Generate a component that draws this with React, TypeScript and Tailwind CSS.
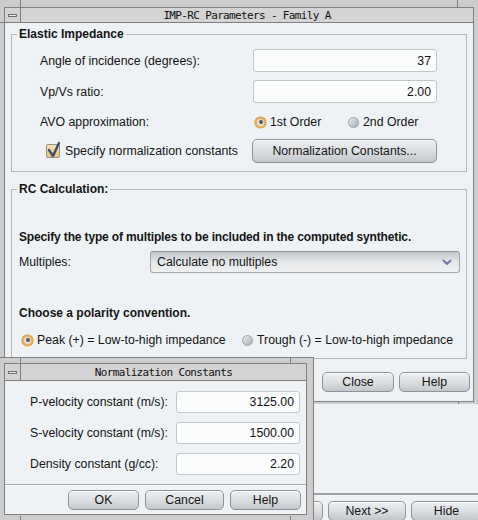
import React from "react";

function Btn({ label, w, h = 20 }: { label: string; w: string; h?: number }) {
  return (
    <div
      className={`${w} ${h === 24 ? "h-[24px]" : "h-[20px]"} shrink-0 flex items-center justify-center rounded-[5px] border border-[#8d9399] bg-linear-to-b from-[#eef0f2] via-[#dcdfe2] to-[#c3c7cb] shadow-[inset_0_1px_0_#ffffff] text-[12.3px] leading-[14px] text-[#141414]`}
    >
      {label}
    </div>
  );
}

function TitleBar({ title, tall }: { title: string; tall?: boolean }) {
  return (
    <div
      className={`${tall ? "h-[17px]" : "h-[15px]"} shrink-0 flex bg-[#d4d4d4] border-b border-[#7f7f7f]`}
    >
      <div className="w-[16px] shrink-0 flex items-center justify-center border-r border-[#7f7f7f]">
        <div className="w-[9px] h-[3px] border border-[#6f6f6f] bg-[#ececec]" />
      </div>
      <div className="flex-1 flex items-center justify-center [font-family:'DejaVu_Sans_Mono',monospace] text-[11px] tracking-[-0.65px] text-[#111] leading-none">
        {title}
      </div>
    </div>
  );
}

function Radio({ on }: { on?: boolean }) {
  if (on) {
    return (
      <span className="w-[11px] h-[11px] shrink-0 rounded-full bg-[#edb04a] flex items-center justify-center shadow-[0_0_0_0.5px_#c98d2a]">
        <span className="w-[7px] h-[7px] rounded-full bg-[#dfe2e6] flex items-center justify-center">
          <span className="w-[4px] h-[4px] rounded-full bg-[#4f586c]" />
        </span>
      </span>
    );
  }
  return (
    <span className="w-[11px] h-[11px] shrink-0 rounded-full border border-[#9aa0a6] bg-linear-to-br from-[#eceef0] to-[#a9aeb3]" />
  );
}

function Input({ value, w, h }: { value: string; w: string; h: string }) {
  return (
    <div
      className={`${w} ${h} shrink-0 flex items-center justify-end pr-[5px] bg-[#fbfcfc] border border-[#c2c6ca] rounded-[3px] text-[12.3px] leading-[14px] text-[#111]`}
    >
      {value}
    </div>
  );
}

export default function App() {
  return (
    <div className="relative w-[478px] h-[520px] overflow-hidden bg-[#cdcdcd] [font-family:'Liberation_Sans',Arial,sans-serif] text-[#141414]">
      {/* Background window (bottom) */}
      <div className="absolute left-0 top-[402px] w-[490px] h-[130px] bg-[#cdcdcd] pt-[1px]">
        <div className="h-full flex flex-col bg-[#eef2f4] border-t border-[#8a8a8a]">
          <div className="h-[89px] shrink-0" />
          <div className="h-[2px] shrink-0 bg-[#9ea2a6]" />
          <div className="flex justify-end gap-[5px] pr-[8px] pt-[6px]">
            <Btn label="" w="w-[78px]" />
            <Btn label="Next >>" w="w-[78px]" />
            <Btn label="Hide" w="w-[71px]" />
          </div>
        </div>
      </div>

      {/* Main window */}
      <div className="absolute left-0 top-0 w-[478px] h-[404px] bg-[#cdcdcd] pt-[7px] px-[4px] pb-[2px]">
        <div className="h-full flex flex-col border border-[#808080]">
          <TitleBar title="IMP-RC Parameters - Family A" />
          <div className="flex-1 bg-[#eef2f4] flex flex-col pt-[4px]">
            {/* Elastic Impedance */}
            <fieldset className="mx-[6px] border border-[#b4b8bc] p-0">
              <legend className="ml-[5px] px-[2px] text-[12px] font-bold leading-[14px]">
                Elastic Impedance
              </legend>
              <div className="pl-[28px] pb-[8px] flex flex-col">
                <div className="mt-[8px] flex items-center h-[23px]">
                  <div className="w-[213px] shrink-0 text-[12.3px] leading-[14px]">
                    Angle of incidence (degrees):
                  </div>
                  <Input value="37" w="w-[184px]" h="h-[23px]" />
                </div>
                <div className="mt-[8px] flex items-center h-[23px]">
                  <div className="w-[213px] shrink-0 text-[12.3px] leading-[14px]">Vp/Vs ratio:</div>
                  <Input value="2.00" w="w-[184px]" h="h-[23px]" />
                </div>
                <div className="mt-[10px] flex items-center h-[18px] text-[12.3px] leading-[14px]">
                  <div className="w-[215px] shrink-0">AVO approximation:</div>
                  <div className="w-[93px] shrink-0 flex items-center gap-[4px]">
                    <Radio on />
                    <span>1st Order</span>
                  </div>
                  <div className="flex items-center gap-[4px]">
                    <Radio />
                    <span>2nd Order</span>
                  </div>
                </div>
                <div className="mt-[8px] flex items-center h-[24px] text-[12.3px] leading-[14px]">
                  <div className="w-[212px] shrink-0 flex items-center pl-[6px] gap-[5px]">
                    <span className="relative w-[14px] h-[14px] shrink-0 rounded-[2px] border border-[#8e949a] bg-linear-to-b from-[#fbe2a4] to-[#f1c467]">
                      <svg
                        className="absolute left-[-1px] top-[-4px]"
                        width="16"
                        height="18"
                        viewBox="0 0 16 18"
                      >
                        <polyline
                          points="3,9 7,15 13,2"
                          fill="none"
                          stroke="#3f4c7a"
                          strokeWidth="2.4"
                          strokeLinecap="round"
                          strokeLinejoin="round"
                        />
                      </svg>
                    </span>
                    <span>Specify normalization constants</span>
                  </div>
                  <Btn label="Normalization Constants..." w="w-[185px]" h={24} />
                </div>
              </div>
            </fieldset>

            {/* RC Calculation */}
            <fieldset className="mx-[6px] mt-[10px] border border-[#b4b8bc] p-0">
              <legend className="ml-[5px] px-[2px] text-[12px] font-bold leading-[14px]">
                RC Calculation:
              </legend>
              <div className="pl-[7px] pr-[6px] pb-[10px] flex flex-col">
                <div className="mt-[34px] h-[14px] text-[12px] font-bold leading-[14px] tracking-[-0.15px]">
                  Specify the type of multiples to be included in the computed synthetic.
                </div>
                <div className="mt-[7px] flex items-center h-[22px] text-[12.3px] leading-[14px]">
                  <div className="w-[131px] shrink-0">Multiples:</div>
                  <div className="flex-1 h-[22px] flex items-center justify-between pl-[6px] pr-[7px] rounded-[3px] border border-[#a2a6aa] border-t-[#8c9094] bg-linear-to-b from-[#c3c7cb] via-[#e5e7e9] to-[#eef0f2]">
                    <span>Calculate no multiples</span>
                    <svg width="10" height="7" viewBox="0 0 10 7">
                      <polyline
                        points="1.5,1.5 5,5 8.5,1.5"
                        fill="none"
                        stroke="#6b7aa6"
                        strokeWidth="2"
                        strokeLinecap="round"
                        strokeLinejoin="round"
                      />
                    </svg>
                  </div>
                </div>
                <div className="mt-[33px] h-[14px] text-[12px] font-bold leading-[14px]">
                  Choose a polarity convention.
                </div>
                <div className="mt-[12px] flex items-center h-[16px] pl-[3px] text-[12.3px] leading-[14px]">
                  <div className="w-[220px] shrink-0 flex items-center gap-[4px]">
                    <Radio on />
                    <span>Peak (+) = Low-to-high impedance</span>
                  </div>
                  <div className="flex items-center gap-[4px]">
                    <Radio />
                    <span>Trough (-) = Low-to-high impedance</span>
                  </div>
                </div>
              </div>
            </fieldset>

            <div className="mt-[13px] flex justify-end gap-[5px] pr-[3px]">
              <Btn label="Close" w="w-[72px]" />
              <Btn label="Help" w="w-[71px]" />
            </div>
          </div>
        </div>
        <div className="absolute left-[20px] top-0 w-px h-[7px] bg-[#808080]" />
        <div className="absolute left-[457px] top-0 w-px h-[7px] bg-[#808080]" />
        <div className="absolute left-0 top-[22px] w-[4px] h-px bg-[#808080]" />
        <div className="absolute left-[458px] top-[402px] w-px h-[2px] bg-[#808080]" />
      </div>

      {/* Normalization Constants dialog */}
      <div className="absolute left-0 top-[357px] w-[314px] h-[170px] bg-[#cdcdcd] border-t border-r border-[#808080] pt-[5px] pl-[4px] pr-[6px]">
        <div className="h-[152px] flex flex-col border border-[#808080]">
          <TitleBar title="Normalization Constants" tall />
          <div className="flex-1 bg-[#eef2f4] flex flex-col">
            <div className="pl-[25px] pr-[5px] flex flex-col text-[12.3px] leading-[14px]">
              <div className="mt-[10px] flex items-center h-[22px]">
                <div className="w-[146px] shrink-0">P-velocity constant (m/s):</div>
                <Input value="3125.00" w="w-[124px]" h="h-[22px]" />
              </div>
              <div className="mt-[9px] flex items-center h-[22px]">
                <div className="w-[146px] shrink-0">S-velocity constant (m/s):</div>
                <Input value="1500.00" w="w-[124px]" h="h-[22px]" />
              </div>
              <div className="mt-[9px] flex items-center h-[22px]">
                <div className="w-[146px] shrink-0">Density constant (g/cc):</div>
                <Input value="2.20" w="w-[124px]" h="h-[22px]" />
              </div>
            </div>
            <div className="mt-[9px] h-px bg-[#a4a8ac]" />
            <div className="h-px bg-[#ffffff]" />
            <div className="mt-[4px] flex justify-end gap-[6px] pr-[5px]">
              <Btn label="OK" w="w-[71px]" />
              <Btn label="Cancel" w="w-[79px]" />
              <Btn label="Help" w="w-[71px]" />
            </div>
          </div>
        </div>
        <div className="absolute left-[20px] top-0 w-px h-[6px] bg-[#808080]" />
        <div className="absolute left-[290px] top-0 w-px h-[6px] bg-[#808080]" />
        <div className="absolute left-[20px] top-[158px] w-px h-[12px] bg-[#808080]" />
        <div className="absolute left-[290px] top-[158px] w-px h-[12px] bg-[#808080]" />
      </div>
    </div>
  );
}
